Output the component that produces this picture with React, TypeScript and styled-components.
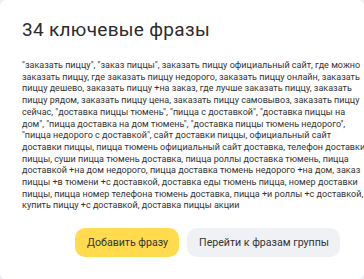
import styled, { createGlobalStyle } from 'styled-components';

const GlobalStyle = createGlobalStyle`
  html, body {
    margin: 0;
    padding: 0;
    background: #eceef3;
  }
  body {
    font-family: Roboto, "Noto Sans", sans-serif;
  }
`;

const Card = styled.div`
  box-sizing: border-box;
  width: 364px;
  height: 279px;
  background: #fff;
  border-radius: 6px;
  padding: 19px 24px 0 22px;
  display: flex;
  flex-direction: column;
`;

const Title = styled.h1`
  margin: 0;
  font-size: 19px;
  font-weight: 400;
  letter-spacing: 0.3px;
  line-height: 22px;
  color: #2b2b2b;
`;

const Phrases = styled.p`
  margin: 19px 0 0;
  font-size: 9px;
  letter-spacing: 0.02px;
  line-height: 11.7px;
  color: #333;
`;

const PhraseLine = styled.span`
  display: block;
  white-space: nowrap;
`;

const Actions = styled.div`
  margin-top: auto;
  margin-bottom: 22px;
  display: flex;
  justify-content: flex-end;
  gap: 8px;
`;

const ActionButton = styled.button<{ $primary?: boolean }>`
  height: 29px;
  padding: 0 11px 0 12px;
  border: none;
  border-radius: 10px;
  font-family: inherit;
  font-size: 10.6px;
  color: #333;
  background: ${({ $primary }) => ($primary ? '#ffdb4d' : '#f0f1f5')};
  cursor: pointer;
`;

const phraseLines = [
  '"заказать пиццу", "заказ пиццы", заказать пиццу официальный сайт, где можно',
  'заказать пиццу, где заказать пиццу недорого, заказать пиццу онлайн, заказать',
  'пиццу дешево, заказать пиццу +на заказ, где лучше заказать пиццу, заказать',
  'пиццу рядом, заказать пиццу цена, заказать пиццу самовывоз, заказать пиццу',
  'сейчас, "доставка пиццы тюмень", "пицца с доставкой", "доставка пиццы на',
  'дом", "пицца доставка на дом тюмень", "доставка пиццы тюмень недорого",',
  '"пицца недорого с доставкой", сайт доставки пиццы, официальный сайт',
  'доставки пиццы, пицца тюмень официальный сайт доставка, телефон доставки',
  'пиццы, суши пицца тюмень доставка, пицца роллы доставка тюмень, пицца',
  'доставкой +на дом недорого, пицца доставка тюмень недорого +на дом, заказ',
  'пиццы +в тюмени +с доставкой, доставка еды тюмень пицца, номер доставки',
  'пиццы, пицца номер телефона тюмень доставка, пицца +и роллы +с доставкой,',
  'купить пиццу +с доставкой, доставка пиццы акции',
];

const App = () => (
  <>
    <GlobalStyle />
    <Card>
      <Title>34 ключевые фразы</Title>
      <Phrases>
        {phraseLines.map((line) => (
          <PhraseLine key={line}>{line}</PhraseLine>
        ))}
      </Phrases>
      <Actions>
        <ActionButton $primary>Добавить фразу</ActionButton>
        <ActionButton>Перейти к фразам группы</ActionButton>
      </Actions>
    </Card>
  </>
);

export default App;
